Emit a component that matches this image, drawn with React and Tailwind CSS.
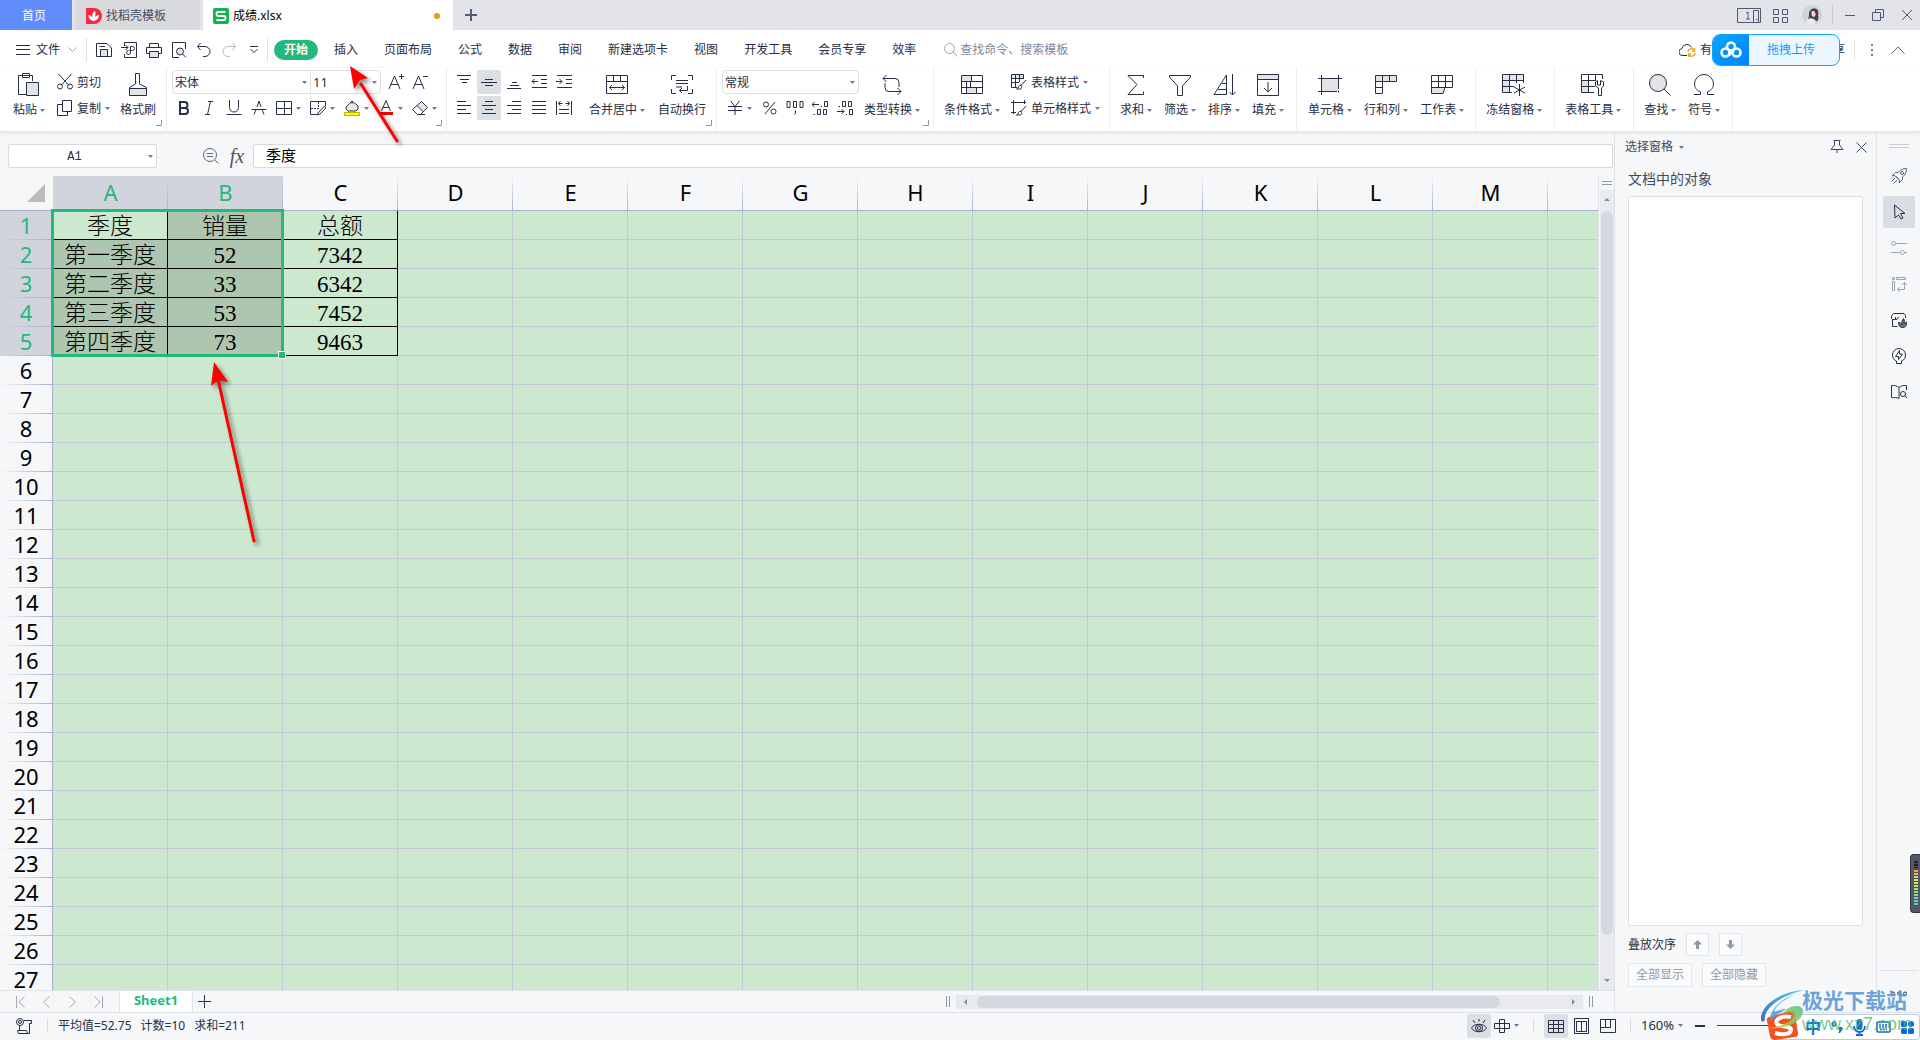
import clsx from "clsx";

const COLUMNS = ["A", "B", "C", "D", "E", "F", "G", "H", "I", "J", "K", "L", "M"];
const ROWS = Array.from({ length: 27 }, (_, i) => i + 1);

const DATA = [
  ["季度", "销量", "总额"],
  ["第一季度", "52", "7342"],
  ["第二季度", "33", "6342"],
  ["第三季度", "53", "7452"],
  ["第四季度", "73", "9463"],
];

const MENUS = ["插入", "页面布局", "公式", "数据", "审阅", "新建选项卡", "视图", "开发工具", "会员专享", "效率"];

function Icon({ w = 16, h = 16, d, shade, stroke = "currentColor", sw = 1, className, children }) {
  return (
    <svg
      width={w}
      height={h}
      viewBox={`0 0 ${w} ${h}`}
      fill="none"
      stroke={stroke}
      strokeWidth={sw}
      className={clsx("shrink-0", className)}
      aria-hidden="true"
    >
      {shade && <path d={shade} fill="#e3e4e6" stroke="none" />}
      {d && <path d={d} />}
      {children}
    </svg>
  );
}

function Caret({ className }) {
  return (
    <svg width="5" height="3" viewBox="0 0 5 3" className={clsx("shrink-0", className)} aria-hidden="true">
      <path d="M0 0H5L2.5 3Z" fill="#6d7a96" />
    </svg>
  );
}

function Corner() {
  return <Icon w={6} h={6} d="M5.5 0V5.5H0" stroke="#8b96ad" className="absolute bottom-1 right-1" />;
}

function Group({ className, corner, children }) {
  return (
    <div className={clsx("relative flex h-[62px] shrink-0 items-start border-r border-[#ebecee] pt-0.5", className)}>
      {children}
      {corner && <Corner />}
    </div>
  );
}

function BigButton({ label, caret = true, children }) {
  return (
    <button type="button" className="flex shrink-0 flex-col items-center gap-1 pt-[3px]">
      <span className="flex h-6 items-center justify-center">{children}</span>
      <span className="flex items-center gap-[3px] whitespace-nowrap leading-[18px]">
        {label}
        {caret && <Caret />}
      </span>
    </button>
  );
}

function SmallButton({ label, caret, children }) {
  return (
    <button type="button" className="flex h-6 items-center gap-1 whitespace-nowrap">
      {children}
      <span className="pt-0.5">{label}</span>
      {caret && <Caret />}
    </button>
  );
}

function Tool({ name, active, wide, children }) {
  return (
    <button
      type="button"
      aria-label={name}
      className={clsx(
        "flex h-6 shrink-0 items-center",
        wide ? "w-[34px] gap-1 pl-1" : "w-6 justify-center rounded-xs",
        active && "bg-[#dbe0e5]"
      )}
    >
      {children}
      {wide && <Caret />}
    </button>
  );
}

function Combo({ name, value, className }) {
  return (
    <label className={clsx("relative flex h-6 items-center border border-[#dcdee2] bg-white", className)}>
      <select aria-label={name} className="h-full w-full appearance-none bg-transparent pl-0.5 pt-0.5 outline-none">
        <option>{value}</option>
      </select>
      <Caret className="pointer-events-none absolute right-[3px]" />
    </label>
  );
}

function TitleBar() {
  return (
    <header className="flex h-[30px] shrink-0 items-stretch bg-[#e2e4e9]">
      <button type="button" className="w-[72px] bg-[#608dfb] pr-1 pt-px text-white">
        首页
      </button>
      <button type="button" className="ml-[3px] flex w-[125px] items-center gap-1 bg-[#d9dade] pl-[11px] pt-0.5 text-[#474f63]">
        <svg width="16" height="16" viewBox="0 0 16 16" aria-hidden="true">
          <path d="M1 0H8A8 8 0 0 1 8 16H1A1 1 0 0 1 0 15V1A1 1 0 0 1 1 0Z" fill="#f9293d" />
          <path d="M7.500 13C3.500 12 2 9 2.500 7C4.500 7 6 8.500 6.500 10C5.500 7 7 4 9 3C10 5 9.500 8 8.500 10C9 8.500 11 7 13 7C13 10 11 12.500 7.500 13Z" fill="#fff" />
        </svg>
        找稻壳模板
      </button>
      <div className="ml-[3px] flex w-[250px] items-center gap-1 bg-white pl-2.5 pt-0.5">
        <svg width="16" height="16" viewBox="0 0 16 16" aria-hidden="true">
          <rect width="16" height="16" rx="2" fill="#14b352" />
          <path d="M12.500 4H5A1.500 1.500 0 0 0 3.500 5.500V6.500A1.500 1.500 0 0 0 5 8H11A1.500 1.500 0 0 1 12.500 9.500V10.500A1.500 1.500 0 0 1 11 12H3.500" fill="none" stroke="#fff" strokeWidth="1.800" />
        </svg>
        <span className="flex-1 text-black">成绩.xlsx</span>
        <span className="mr-[13px] size-1.5 rounded-full bg-[#e89c0c]" />
      </div>
      <button type="button" aria-label="新建" className="ml-3 text-[#515d78]">
        <Icon w={12} h={12} d="M6 0V12M0 6H12" sw={2} />
      </button>
      <div className="ml-auto flex items-center pr-2 text-[#4d5873]">
        <button type="button" aria-label="窗口布局" className="mr-3">
          <Icon w={24} h={15}>
            <path d="M.5 .5H23.500V14.500H.5Z M16.500 2.500H21.500V14M16.500 2.500V14.500M19 11.500H20.500M9 5L11 4V11M9 11H13" />
          </Icon>
        </button>
        <button type="button" aria-label="应用" className="mr-3.5">
          <Icon w={15} h={15} d="M.5 1.500H5.500V6.500H.5ZM9.500 1.500H14.500V6.500H9.500ZM.5 9.500H5.500V14.500H.5ZM9.500 9.500H14.500V14.500H9.500Z" />
        </button>
        <svg width="20" height="20" viewBox="0 0 20 20" role="img" aria-label="用户头像">
          <circle cx="10" cy="10" r="10" fill="#c9d6db" />
          <path d="M7 9C7 5 10 3 13 3.500C16 4 17 7 16 10C17 12 16 15 15 16.500L12 14L8 13L6 14.500C7 12 7 11 7 9Z" fill="#4b3c42" />
          <path d="M9.500 6.500C12 5 14 7 13.500 10C13 13 10 12 9.500 10Z" fill="#f1d7cf" />
          <path d="M4 17C5 14 8 13 11 14L13.500 18.500C10 20.500 7 20 4 17Z" fill="#e8f0f2" />
        </svg>
        <span className="ml-2.5 h-5 w-px bg-[#c8cbd2]" />
        <button type="button" aria-label="最小化" className="ml-3">
          <Icon w={10} h={10} d="M0 5.500H10" />
        </button>
        <button type="button" aria-label="还原" className="ml-[17px]">
          <Icon w={12} h={12} d="M.5 3.500H8.500V11.500H.5ZM3.500 3.500V.5H11.500V8.500H8.500" />
        </button>
        <button type="button" aria-label="关闭" className="ml-[18px]">
          <Icon w={10} h={10} d="M0 0L10 10M10 0L0 10" />
        </button>
      </div>
    </header>
  );
}

function MenuBar() {
  return (
    <nav className="flex h-[38px] shrink-0 items-center bg-white pl-4 pt-px">
      <button type="button" className="flex items-center gap-1.5">
        <Icon w={14} h={10} d="M0 .5H14M0 4.500H14M0 9.500H14" />
        文件
        <Icon w={9} h={5} d="M.5 .5L4.500 4.500L8.500 .5" stroke="#9ba0aa" className="ml-0.5" />
      </button>
      <span className="ml-[9px] h-6 w-px bg-[#dfe1e4]" />
      <div className="ml-[9px] flex items-center gap-[9px]">
        <button type="button" aria-label="保存">
          <Icon d="M.5 1.500H11L15.500 6V14.500H.5ZM4.500 14V7.500H11.500V14M3.500 4.500H9" shade="M5 8H11V14H5Z" />
        </button>
        <button type="button" aria-label="输出为PDF">
          <Icon d="M3.500 4V.5H15.500V15.500H3.500V12M0 5.500H7M4.500 3L7 5.500L4.500 8M9.500 4.500H11.500A2 2 0 0 1 11.500 8.500H8.500M9.500 4.500V10A2 2 0 1 1 7.500 8.500" />
        </button>
        <button type="button" aria-label="打印">
          <Icon d="M3.500 5V1.500H12.500V5M3.500 11.500H.5V5.500H15.500V11.500H12.500M3.500 9.500H12.500V15.500H3.500Z" shade="M4 10H12V15H4Z" />
        </button>
        <button type="button" aria-label="打印预览">
          <Icon d="M8 15.500H1.500V.5H14.500V7M11.500 12L15 15.500M12.500 9.500A3.500 3.500 0 1 1 5.500 9.500A3.500 3.500 0 1 1 12.500 9.500" shade="M12.500 9.500A3.500 3.500 0 1 1 5.500 9.500A3.500 3.500 0 1 1 12.500 9.500" />
        </button>
        <button type="button" aria-label="撤销">
          <Icon d="M4.500 1L1.500 4.500L4.500 8M1.500 4.500H9A4.500 4.500 0 0 1 9 14.500H7" />
        </button>
        <button type="button" aria-label="恢复">
          <Icon d="M11.500 1L14.500 4.500L11.500 8M14.500 4.500H7A4.500 4.500 0 0 0 7 14.500H9" stroke="#b9bcc2" />
        </button>
        <button type="button" aria-label="自定义快速访问工具栏" className="ml-1">
          <Icon w={8} h={8} d="M0 .5H8M.5 3L4 6.500L7.500 3" />
        </button>
      </div>
      <span className="ml-[9px] h-6 w-px bg-[#dfe1e4]" />
      <button type="button" className="ml-1.5 h-5 w-11 rounded-full bg-[#24b97b] font-bold text-white">
        开始
      </button>
      <div className="ml-4 flex items-center gap-[26px] whitespace-nowrap pt-px">
        {MENUS.map((menu) => (
          <button key={menu} type="button">
            {menu}
          </button>
        ))}
      </div>
      <label className="ml-7 flex items-center gap-0.5">
        <Icon w={14} h={14} d="M10.500 5.500A5 5 0 1 1 .5 5.500A5 5 0 1 1 10.500 5.500M9 9L13.500 13.500" stroke="#9aa5bd" />
        <input
          type="text"
          aria-label="搜索"
          placeholder="查找命令、搜索模板"
          className="w-32 outline-none placeholder:text-[#7c88a3]"
        />
      </label>
      <div className="ml-auto flex items-center">
        <Icon w={17} h={14}>
          <path d="M8 12.500H4A3.500 3.500 0 0 1 3 5.500A5 5 0 0 1 12.500 4.500" />
          <path d="M9 9A3.500 3.500 0 0 1 15.500 7.500M16 10A3.500 3.500 0 0 1 9.500 11.500M15.500 5V8H13M9.500 14V11H12" stroke="#f5a623" strokeWidth="1.500" />
        </Icon>
        <span className="ml-1 w-3 overflow-hidden">有</span>
        <button type="button" className="relative z-10 flex h-8 w-32 overflow-hidden rounded-lg border border-[#14a4fd] bg-[#ecf7ff] text-[#0d9ffb]">
          <span className="flex h-full w-9 items-center justify-center bg-linear-to-br from-[#08a8ff] to-[#0580ff]">
            <svg width="22" height="18" viewBox="0 0 22 18" fill="none" stroke="#fff" strokeWidth="2.500" aria-hidden="true">
              <circle cx="11" cy="5.500" r="4" />
              <circle cx="5.500" cy="11.500" r="4" />
              <circle cx="16.500" cy="11.500" r="4" />
              <path d="M9 14L14 9" />
            </svg>
          </span>
          <span className="flex-1 self-center pr-1.5">拖拽上传</span>
        </button>
        <span className="-ml-[7px]">享</span>
        <span className="ml-[9px] h-5 w-px bg-[#dfe1e4]" />
        <button type="button" aria-label="更多" className="ml-4 text-[#7a8190]">
          <Icon w={2} h={12} d="M1 0V2M1 5V7M1 10V12" sw={2} />
        </button>
        <button type="button" aria-label="折叠功能区" className="ml-[18px] mr-[15px] text-[#5c6475]">
          <Icon w={14} h={8} d="M.5 7.500L7 1L13.500 7.500" />
        </button>
      </div>
    </nav>
  );
}

function Ribbon() {
  return (
    <div className="z-10 flex h-16 shrink-0 overflow-hidden border-b border-[#e4e6e9] bg-white shadow-[0_1px_4px_rgba(0,0,0,.08)]">
      <Group corner className="w-[167px] pl-[13px]">
        <BigButton label="粘贴">
          <Icon w={22} h={24} d="M14.500 8V2.500H.5V21.500H8.500M4.500 .5H11.500V4.500H4.500ZM8.500 9.500H20.500V22.500H8.500Z" shade="M9 10H20V22H9Z" />
        </BigButton>
        <div className="ml-3 flex w-[53px] flex-col gap-0.5">
          <SmallButton label="剪切">
            <Icon d="M1.500 0L12 11.500M14.500 0L4 11.500M5.500 12.500A2.500 2.500 0 1 1 .5 12.500A2.500 2.500 0 1 1 5.500 12.500M15.500 12.500A2.500 2.500 0 1 1 10.500 12.500A2.500 2.500 0 1 1 15.500 12.500" />
          </SmallButton>
          <SmallButton label="复制" caret>
            <Icon d="M5.500 .5H14.500V11.500H5.500ZM5 4.500H.5V15.500H10.500V12" />
          </SmallButton>
        </div>
        <div className="ml-2.5">
          <BigButton label="格式刷" caret={false}>
            <Icon w={20} h={24} d="M7.500 11V.5H11.500V11M7.500 11L1.500 14.500V22.500H18.500V14.500L11.500 11M1.500 15.500H18.500" shade="M2 16H18V22H2Z" />
          </BigButton>
        </div>
      </Group>

      <Group corner className="w-[280px] flex-col gap-0.5 pl-[5px]">
        <div className="flex">
          <Combo name="字体" value="宋体" className="w-[139px] rounded-l-sm" />
          <Combo name="字号" value="11" className="-ml-px w-[71px] rounded-r-sm text-[13px]" />
          <div className="ml-[3px] flex">
            <Tool name="增大字号">
              <Icon d="M1 15L6.500 2L12 15M3 10.500H10M11 2.500H16M13.500 0V5" />
            </Tool>
            <Tool name="减小字号">
              <Icon d="M1 15L6.500 2L12 15M3 10.500H10M11 2.500H16" />
            </Tool>
          </div>
        </div>
        <div className="flex">
          <div className="flex gap-px pr-px">
            <Tool name="加粗">
              <Icon w={12} h={14} d="M2 1V13M1 1H6.500A2.500 2.500 0 0 1 6.500 7H2M6.500 7H7A3 3 0 0 1 7 13H1" sw={2} />
            </Tool>
            <Tool name="倾斜">
              <Icon w={10} h={14} d="M4 .5H9M1 13.500H6M6.500 .5L3.500 13.500" />
            </Tool>
            <Tool name="下划线">
              <Icon w={16} h={16} d="M3.500 0V7.500A4.500 4.500 0 0 0 12.500 7.500V0M.5 14.500H15.500" />
            </Tool>
            <Tool name="删除线">
              <Icon w={16} h={16} d="M3 14.500L5 9.500M6 7L8 1L10 7M11 9.500L13 14.500M.5 9.500H15.500" />
            </Tool>
          </div>
          <Tool wide name="边框">
            <Icon d="M.5 1.500H15.500V14.500H.5ZM8.500 1.500V14.500M.5 8.500H15.500" />
          </Tool>
          <Tool wide name="绘图边框">
            <Icon>
              <path d="M15.500 6V1.500H.5V14.500H7M8 13L14.500 6L16 8L10 14L7.500 15Z" />
              <path d="M1 8.500H9M8.500 2V9" strokeDasharray="2 1" />
            </Icon>
          </Tool>
          <Tool wide name="填充颜色">
            <Icon>
              <path d="M2 7L8 1L14 6V9L12 11H4L2 9Z" fill="#e9eaec" />
              <path d="M8 1V4" />
              <path d="M.5 12.500H15.500V15.500H.5Z" fill="#ff0" stroke="#b8b800" />
            </Icon>
          </Tool>
          <Tool wide name="字体颜色">
            <Icon>
              <path d="M3.500 11L8 .5L12.500 11M5 7.500H11" />
              <path d="M1 13.500H15" stroke="#f00" strokeWidth="3" />
            </Icon>
          </Tool>
          <Tool wide name="清除">
            <Icon d="M9.500 1.500L15.500 7.500L8.500 14.500H5.500L.5 9.500ZM5 5.500L11.500 12M6 14.500H13" shade="M9.500 2L15 7.500L11 11L5.500 5.500Z" />
          </Tool>
        </div>
      </Group>

      <Group corner className="w-[270px] pl-[5px]">
        <div className="flex flex-col gap-0.5">
          <div className="flex gap-px">
            <Tool name="顶端对齐">
              <Icon d="M1 1.500H15M4 5.500H13M6 8.500H11" />
            </Tool>
            <Tool name="垂直居中" active>
              <Icon d="M4 5.500H12M0 8.500H16M4 11.500H12" />
            </Tool>
            <Tool name="底端对齐">
              <Icon d="M6 8.500H11M4 11.500H13M1 14.500H15" />
            </Tool>
            <Tool name="减少缩进量">
              <Icon d="M1 1.500H16M10 5.500H16M10 9.500H16M1 13.500H16M1 7.500H7M3.500 5L1 7.500L3.500 10" />
            </Tool>
            <Tool name="增加缩进量">
              <Icon d="M1 1.500H16M10 5.500H16M10 9.500H16M1 13.500H16M0 7.500H6M3.500 5L6 7.500L3.500 10" />
            </Tool>
          </div>
          <div className="flex gap-px">
            <Tool name="左对齐">
              <Icon d="M1 1.500H10M1 5.500H15M1 9.500H10M1 13.500H15" />
            </Tool>
            <Tool name="水平居中" active>
              <Icon d="M4 1.500H12M1 5.500H15M4 9.500H12M1 13.500H15" />
            </Tool>
            <Tool name="右对齐">
              <Icon d="M6 1.500H15M1 5.500H15M6 9.500H15M1 13.500H15" />
            </Tool>
            <Tool name="两端对齐">
              <Icon d="M1 1.500H15M1 5.500H15M1 9.500H15M1 13.500H15" />
            </Tool>
            <Tool name="分散对齐">
              <Icon d="M.5 1V15M15.500 1V15M3 9.500H13M3 13.500H13M2.500 3.500H6.500M9.500 3.500H13.500M4.500 1L2.500 3.500L4.500 6M11.500 1L13.500 3.500L11.500 6" />
            </Tool>
          </div>
        </div>
        <div className="ml-[13px] flex gap-[13px]">
          <BigButton label="合并居中">
            <Icon w={22} h={20} d="M.5 .5H21.500V18.500H.5ZM.5 6.500H21.500M7.500 .5V6.500M14.500 .5V6.500M3.500 12.500H18.500M6 10L3.500 12.500L6 15M16 10L18.500 12.500L16 15" />
          </BigButton>
          <BigButton label="自动换行" caret={false}>
            <Icon w={22} h={20} d="M5 .5H.5V5M17 .5H21.500V5M5 18.500H.5V14M17 18.500H21.500V14M5 5.500H17M5 8.500H17M5 12H11M16.500 11V15.500H8.500M11 13L8.500 15.500L11 18" />
          </BigButton>
        </div>
      </Group>

      <Group corner className="w-[217px] pl-[5px]">
        <div className="flex flex-col gap-0.5">
          <Combo name="数字格式" value="常规" className="w-[137px] rounded-sm" />
          <div className="flex gap-px pl-px">
            <Tool wide name="货币">
              <Icon w={16} h={16} d="M3.500 1L8 6.500L12.500 1M1 6.500H15M1 10.500H15M8 6.500V15" />
            </Tool>
            <Tool name="百分比">
              <Icon w={14} h={14} d="M12 1L2 13M5.500 3.500A2.500 2.500 0 1 1 .5 3.500A2.500 2.500 0 1 1 5.500 3.500M13 10.500A2.500 2.500 0 1 1 8 10.500A2.500 2.500 0 1 1 13 10.500" />
            </Tool>
            <Tool name="千位分隔">
              <Icon w={18} h={16} d="M1 1.500H4V7.500H1ZM7.500 1.500H10.500V7.500H7.500ZM14 1.500H17V7.500H14ZM9.500 10.500V13L8.500 14.500" />
            </Tool>
            <Tool name="增加小数位">
              <Icon w={16} h={16} d="M0 4.500H7M2.500 2L0 4.500L2.500 7M9 6.500H10M12.500 1.500H15.500V6.500H12.500ZM1.500 14.500H3M5.500 9.500H8.500V14.500H5.500ZM11.500 9.500H14.500V14.500H11.500Z" />
            </Tool>
            <Tool name="减少小数位">
              <Icon w={16} h={16} d="M1.500 6.500H3M5.500 1.500H8.500V6.500H5.500ZM11.500 1.500H14.500V6.500H11.500ZM0 11.500H7M4.500 9L7 11.500L4.500 14M9 14.500H10M12.500 9.500H15.500V14.500H12.500Z" />
            </Tool>
          </div>
        </div>
        <div className="ml-[5px]">
          <BigButton label="类型转换">
            <Icon w={20} h={22} d="M1 4.500H13A4 4 0 0 1 17 8.500V13M4.500 1L1 4.500L4.500 8M19 17.500H7A4 4 0 0 1 3 13.500V9M15.500 14L19 17.500L15.500 21" />
          </BigButton>
        </div>
      </Group>

      <Group className="pl-2.5 pr-[9px]">
        <BigButton label="条件格式">
          <Icon w={22} h={20} d="M.5 .5H21.500V18.500H.5ZM.5 6.500H21.500M.5 12.500H21.500M10.500 .5V6.500M5.500 6.500V18.500M9.500 6.500V12.500M15.500 12.500V18.500" shade="M1 1H10V6H1ZM6 13H15V18H6Z" />
        </BigButton>
        <div className="ml-[11px] flex flex-col gap-0.5">
          <SmallButton label="表格样式" caret>
            <Icon d="M6 13.500H.5V.5H12.500V5M.5 4.500H12.500M.5 8.500H8M4.500 .5V13M8.500 .5V8M15 6L10 11.500M10 11C7 11 8 14 5.500 15H9C11 15 11 13 10 11Z" shade="M1 1H12V4H1Z" />
          </SmallButton>
          <SmallButton label="单元格样式" caret>
            <Icon d="M0 2.500H15M2.500 0V14M13.500 0V4M0 12.500H5M15 6L10 11.500M10 11C7 11 8 14 5.500 15H9C11 15 11 13 10 11Z" />
          </SmallButton>
        </div>
      </Group>

      <Group className="gap-3 pl-2.5 pr-3">
        <BigButton label="求和">
          <Icon w={18} h={22} d="M16.500 4V1.500H1L10 10.500L1 20.500H16.500V17.500" />
        </BigButton>
        <BigButton label="筛选">
          <Icon w={22} h={22} d="M.5 1.500H21.500V3L13.500 12V21.500H8.500V12L.5 3Z" />
        </BigButton>
        <BigButton label="排序">
          <Icon w={23} h={22} d="M1 20.500L13.500 1V20.500ZM5 15.500H13M9 9.500H13M19.500 0V21M16.500 18L19.500 21L22.500 18" />
        </BigButton>
        <BigButton label="填充">
          <Icon w={22} h={22} d="M.5 .5H21.500V21.500H.5ZM.5 5.500H21.500M11 8V18M7 14L11 18L15 14" shade="M1 1H21V5H1Z" />
        </BigButton>
      </Group>

      <Group className="gap-3 pl-[11px] pr-[11px]">
        <BigButton label="单元格">
          <Icon w={24} h={20} d="M0 3.500H24M3.500 0V20M20.500 0V14M0 16.500H19M20.500 15.500V17.500" shade="M4 4H20V16H4Z" />
        </BigButton>
        <BigButton label="行和列">
          <Icon w={22} h={20} d="M.5 .5H21.500V6.500H7.500V18.500H.5ZM.5 6.500H7.500M.5 12.500H7.500M7.500 .5V6.500M14.500 .5V6.500" shade="M1 1H21V6H1Z" />
        </BigButton>
        <BigButton label="工作表">
          <Icon w={22} h={20} d="M.5 .5H21.500V12.500H.5ZM.5 6.500H21.500M7.500 .5V12.500M14.500 .5V12.500M.5 12.500V18.500H12L14 12.500" shade="M1 13H13L12 18H1Z" />
        </BigButton>
      </Group>

      <Group className="pl-2.5 pr-3">
        <BigButton label="冻结窗格">
          <Icon w={24} h={22} d="M10 18.500H.5V.5H21.500V9M.5 6.500H21.500M.5 12.500H12M7.500 .5V18.500M14.500 .5V9M17.500 10V22M12 13L23 19M23 13L12 19" shade="M1 1H21V6H7V18H1Z" />
        </BigButton>
      </Group>

      <Group className="pl-2.5 pr-3">
        <BigButton label="表格工具">
          <Icon w={24} h={22} d="M13 18.500H.5V.5H21.500V5M.5 6.500H15M.5 12.500H14M7.500 .5V18.500M14.500 .5V6M17.500 21.500V14L14.500 12V8L16.500 6.500V11H19.500V6.500L22.500 8V12L20.500 14V21.500Z" shade="M1 7H7V18H1Z" />
        </BigButton>
      </Group>

      <Group className="gap-3 pl-2.5 pr-3">
        <BigButton label="查找">
          <Icon w={22} h={22} d="M17.500 9A8.500 8.500 0 1 1 .5 9A8.500 8.500 0 1 1 17.500 9M15 15L21.500 21.500" shade="M17.500 9A8.500 8.500 0 1 1 .5 9A8.500 8.500 0 1 1 17.500 9" />
        </BigButton>
        <BigButton label="符号">
          <Icon w={22} h={22} d="M1 20.500H7.500V18C3 16 1.500 13 1.500 10A9.500 9.500 0 0 1 20.500 10C20.500 13 19 16 14.500 18V20.500H21" />
        </BigButton>
      </Group>
    </div>
  );
}

function FormulaBar() {
  return (
    <div className="flex h-11 shrink-0 items-start pl-2 pr-px pt-3 text-[#262f45]">
      <label className="relative flex h-6 w-[149px] items-center rounded-xs border border-[#d8dadf] bg-white">
        <input
          type="text"
          aria-label="名称框"
          defaultValue="A1"
          className="w-full bg-transparent pr-4 pt-0.5 text-center font-['Liberation_Mono',monospace] text-xs outline-none"
        />
        <Caret className="absolute right-[3px]" />
      </label>
      <button type="button" aria-label="浏览公式结果" className="ml-[46px] flex h-6 items-center text-[#5b6377]">
        <Icon d="M13.500 7A6.500 6.500 0 1 1 .5 7A6.500 6.500 0 1 1 13.500 7M11.500 11.500L15.500 15.500M4 5.500H10M4 8.500H10" />
      </button>
      <button type="button" aria-label="插入函数" className="ml-2.5 w-4 font-['Liberation_Serif',serif] text-xl italic leading-6 text-[#4b5469]">
        fx
      </button>
      <input
        type="text"
        aria-label="编辑栏"
        defaultValue="季度"
        className="ml-2 h-6 min-w-0 flex-1 rounded-xs border border-[#d8dadf] bg-white pb-1 pl-3 text-[15px] leading-[18px] text-black outline-none"
      />
    </div>
  );
}

function Sheet() {
  return (
    <div className="relative min-h-0 flex-1 overflow-hidden">
      <table className="w-full table-fixed border-separate border-spacing-0 text-center font-['Noto_Sans','Noto_Sans_CJK_SC',sans-serif] text-[22px] text-black">
        <colgroup>
          <col className="w-[53px]" />
          {COLUMNS.map((col) => (
            <col key={col} className="w-[115px]" />
          ))}
          <col />
        </colgroup>
        <thead>
          <tr className="h-[35px]">
            <th className="border-b border-[#a9b0ca] p-0">
              <svg width="18" height="18" viewBox="0 0 18 18" className="ml-auto mr-2" aria-hidden="true">
                <path d="M18 0V18H0Z" fill="#bbbcbe" />
              </svg>
            </th>
            {COLUMNS.map((col, i) => (
              <th
                key={col}
                className={clsx(
                  "border-b border-[#a9b0ca] bg-[linear-gradient(to_bottom,transparent,#a9b0ca)] bg-[length:1px_100%] bg-right bg-no-repeat p-0 pb-0.5 font-normal leading-8",
                  i < 2 && "bg-[#d1d4dc] text-[#24b97b]"
                )}
              >
                {col}
              </th>
            ))}
            <th className="border-b border-[#a9b0ca] p-0" />
          </tr>
        </thead>
        <tbody>
          {ROWS.map((row) => (
            <tr key={row} className="h-[29px]">
              <th
                className={clsx(
                  "border-r border-[#a9b0ca] bg-[linear-gradient(to_right,transparent,#a9b0ca)] bg-[length:100%_1px] bg-bottom bg-no-repeat p-0 pb-0.5 font-normal leading-[26px]",
                  row <= 5 && "bg-[#d1d4dc] text-[#24b97b]"
                )}
              >
                {row}
              </th>
              {[...COLUMNS, ""].map((col, c) => {
                const value = DATA[row - 1]?.[c];
                return (
                  <td
                    key={col}
                    className={clsx(
                      "border-b p-0",
                      c < 13 && "border-r",
                      value
                        ? "border-black pt-1 font-['Liberation_Serif','Noto_Sans_CJK_SC',serif] text-[23px] font-light leading-6"
                        : "border-[#c4c9db]",
                      value && c < 2 && !(c === 0 && row === 1) ? "bg-[#aec5af]" : "bg-[#cce8cf]"
                    )}
                  >
                    {value}
                  </td>
                );
              })}
            </tr>
          ))}
        </tbody>
      </table>
      {/* selection frame A1:B5 with its fill handle */}
      <div className="pointer-events-none absolute left-[51px] top-[33px] h-[148px] w-[233px] border-3 border-[#24b97b]">
        <span className="absolute -bottom-1 -right-1 size-1.5 bg-[#24b97b] outline outline-white" />
      </div>
    </div>
  );
}

function VerticalScroll() {
  return (
    <div className="flex w-4 shrink-0 flex-col items-center border-l border-[#dfe1e6]">
      <Icon w={10} h={4} d="M0 .5H10M0 3.500H10" stroke="#8d97ad" className="my-[5px]" />
      <div className="flex w-[14px] flex-1 flex-col items-center bg-[#e9eaef]">
        <Icon w={6} h={3} className="my-2">
          <path d="M0 3H6L3 0Z" fill="#7f8ba8" stroke="none" />
        </Icon>
        <div className="mt-0.5 w-3 flex-1 rounded-full bg-[#d5d8e0]" />
        <Icon w={6} h={3} className="mb-2 mt-11">
          <path d="M0 0H6L3 3Z" fill="#7f8ba8" stroke="none" />
        </Icon>
      </div>
    </div>
  );
}

function SheetTabs() {
  return (
    <div className="flex h-[22px] shrink-0 items-center border-t border-[#dfe2e8] pl-4">
      <div className="flex items-center gap-[17px] text-[#a6a9b0]">
        <button type="button" aria-label="第一张">
          <Icon w={9} h={12} d="M.5 0V12M8.500 .5L3 6L8.500 11.500" />
        </button>
        <button type="button" aria-label="上一张">
          <Icon w={9} h={12} d="M7.500 .5L1.500 6L7.500 11.500" />
        </button>
        <button type="button" aria-label="下一张">
          <Icon w={9} h={12} d="M1.500 .5L7.500 6L1.500 11.500" />
        </button>
        <button type="button" aria-label="最后一张">
          <Icon w={9} h={12} d="M8.500 0V12M.5 .5L6 6L.5 11.500" />
        </button>
      </div>
      <button type="button" className="ml-4 h-full w-[74px] border-x border-[#dfe2e8] bg-white pb-px text-[13px] font-bold text-[#24b97b]">
        Sheet1
      </button>
      <button type="button" aria-label="新建工作表" className="ml-[5px]">
        <Icon w={13} h={13} d="M6.500 0V13M0 6.500H13" />
      </button>
      <div className="ml-auto flex items-center pr-[21px]">
        <Icon w={4} h={11} d="M.5 0V11M3.500 0V11" stroke="#8d97ad" />
        <div className="mx-1.5 flex h-3.5 w-[627px] items-center bg-[#e9eaef]">
          <Icon w={3} h={6} className="ml-2">
            <path d="M3 0V6L0 3Z" fill="#7f8ba8" stroke="none" />
          </Icon>
          <div className="ml-2.5 mr-[72px] h-3 flex-1 rounded-full bg-[#d5d8e0]" />
          <Icon w={3} h={6} className="mr-2">
            <path d="M0 0V6L3 3Z" fill="#7f8ba8" stroke="none" />
          </Icon>
        </div>
        <Icon w={4} h={11} d="M.5 0V11M3.500 0V11" stroke="#8d97ad" />
      </div>
    </div>
  );
}

function SelectionPane() {
  return (
    <aside className="flex w-[262px] shrink-0 flex-col border-l border-[#dfe1e6] pb-[25px] pl-[13px] pr-[13px] text-[#3f4860]">
      <div className="-ml-[3px] -mr-1 flex h-[30px] items-center">
        <button type="button" className="flex items-center gap-1.5">
          选择窗格
          <Caret />
        </button>
        <button type="button" aria-label="固定" className="ml-auto">
          <Icon w={14} h={14} d="M3.500 .5H10.500M4.500 .5V5L1 9.500H13L9.500 5V.5M7 9.500V13" />
        </button>
        <button type="button" aria-label="关闭窗格" className="ml-3">
          <Icon w={11} h={11} d="M.5 .5L10.500 10.500M10.500 .5L.5 10.500" />
        </button>
      </div>
      <h2 className="my-[7px] text-sm leading-5">文档中的对象</h2>
      <div className="min-h-0 flex-1 rounded-xs border border-[#dcdee3] bg-white" />
      <div className="mt-[7px] flex items-center">
        <span className="mr-2.5 text-[#262f45]">叠放次序</span>
        <button type="button" aria-label="上移一层" className="mr-2.5 flex size-[23px] items-center justify-center border border-[#e3e5e9] bg-[#fafbfc] text-[#8f97a8]">
          <svg width="9" height="9" viewBox="0 0 9 9" fill="currentColor" aria-hidden="true">
            <path d="M4.500 0L9 4.500H6V9H3V4.500H0Z" />
          </svg>
        </button>
        <button type="button" aria-label="下移一层" className="flex size-[23px] items-center justify-center border border-[#e3e5e9] bg-[#fafbfc] text-[#8f97a8]">
          <svg width="9" height="9" viewBox="0 0 9 9" fill="currentColor" aria-hidden="true">
            <path d="M4.500 9L0 4.500H3V0H6V4.500H9Z" />
          </svg>
        </button>
      </div>
      <div className="mt-[7px] flex gap-2.5 text-[#9299a9]">
        <button type="button" className="h-6 w-16 border border-[#e3e5e9] bg-[#fafbfc]">
          全部显示
        </button>
        <button type="button" className="h-6 w-16 border border-[#e3e5e9] bg-[#fafbfc]">
          全部隐藏
        </button>
      </div>
    </aside>
  );
}

function RailButton({ name, active, className, children }) {
  return (
    <button
      type="button"
      aria-label={name}
      className={clsx("flex size-8 items-center justify-center rounded-xs", active && "bg-[#d9dde4]", className)}
    >
      {children}
    </button>
  );
}

function SideRail() {
  return (
    <aside className="flex w-11 shrink-0 flex-col items-center gap-1 border-l border-[#e3e5e9] pb-4 pt-3">
      <Icon w={20} h={4} d="M0 .5H20M0 3.500H20" stroke="#c9ccd2" className="mb-2" />
      <RailButton name="会员" className="text-[#5a6480]">
        <Icon d="M4.500 8L3 7.500L1 8L4.500 4.500H7C9 2 12 .5 15.500 .5C15.500 4 14 7 11.500 9V11.500L8 15L8.500 13L8 11.500ZM4.500 8L8 11.500M12.500 5A1.500 1.500 0 1 1 9.500 5A1.500 1.500 0 1 1 12.500 5M4 10L.5 13.500M6 12L2.500 15.500M2 9.500L1 10.500" />
      </RailButton>
      <RailButton name="选择" active className="text-[#262f45]">
        <Icon d="M3.500 1L14 9.500H9.500L12 14L10 15L7.500 11L4 14Z" />
      </RailButton>
      <RailButton name="属性" className="text-[#9aa1b0]">
        <Icon d="M5 3.500H16M0 12.500H9M4.500 3.500A2 2 0 1 1 .5 3.500A2 2 0 1 1 4.500 3.500M13.500 12.500A2 2 0 1 1 9.500 12.500A2 2 0 1 1 13.500 12.500M14 12.500H16" />
      </RailButton>
      <RailButton name="表格分析" className="text-[#9aa1b0]">
        <Icon d="M1.500 1.500H3.500V3.500H1.500ZM5.500 1.500H14.500V3.500H5.500ZM1.500 5.500H3.500V14.500H1.500ZM13.500 6.500V13.500H7M11 9L13.500 6.500L16 9M9 11L6.500 13.500L9 16" />
      </RailButton>
      <RailButton name="素材" className="text-[#262f45]">
        <Icon>
          <path d="M1.500 7.500V14.500H6.500M14.500 6V3.500L13 1.500H2.500L.5 4V6.500L1.500 7.500H4.500V5M4.500 7L6 7.500L7.500 5" />
          <path d="M11.500 15.500C8.500 15.500 7.500 13 7.500 10.500C9 10.500 10.500 11.500 11 13C10.500 10.500 11 8 12.500 6.500C13.500 8 13.500 10.500 13 12C13.500 11 15 10 16 10C16 13 14.500 15.500 11.500 15.500Z" fill="#6d7486" />
        </Icon>
      </RailButton>
      <RailButton name="智能" className="text-[#262f45]">
        <Icon d="M5.500 13C2.500 12 1.500 9.500 1.500 7A6.500 6.500 0 0 1 14.500 7C14.500 9.500 13.500 12 10.500 13V15.500H5.500ZM8.500 2.500L4.500 8.500H7.500V11.500L11.500 6H8.500Z" />
      </RailButton>
      <RailButton name="帮助" className="text-[#262f45]">
        <Icon d="M8 3.500C6 1.500 3 1.500 .5 1.500V13.500C3 13.500 6 13.500 8 14.500V3.500C10 1.500 13 1.500 15.500 1.500V6M14.500 10A2.500 2.500 0 1 1 9.500 10A2.500 2.500 0 1 1 14.500 10M14 12L16 14" />
      </RailButton>
      <span className="mt-auto h-px w-[38px] bg-[#dfe1e6]" />
      <button type="button" aria-label="更多工具" className="mt-4 text-[#262f45]">
        <Icon w={16} h={5} d="M3.500 2.500A1.500 1.500 0 1 1 .5 2.500A1.500 1.500 0 1 1 3.500 2.500M9.500 2.500A1.500 1.500 0 1 1 6.500 2.500A1.500 1.500 0 1 1 9.500 2.500M15.500 2.500A1.500 1.500 0 1 1 12.500 2.500A1.500 1.500 0 1 1 15.500 2.500" />
      </button>
    </aside>
  );
}

function StatusBar() {
  return (
    <footer className="flex h-7 shrink-0 items-center border-t border-[#dfe2e8] pb-0.5 pl-4">
      <button type="button" aria-label="录制宏">
        <Icon d="M7.500 4A3.500 3.500 0 1 1 .5 4A3.500 3.500 0 1 1 7.500 4M5.500 4A1.500 1.500 0 1 1 2.500 4A1.500 1.500 0 1 1 5.500 4M8 2.500H15.500V5.500H13.500V15.500H2.500L1.500 12.500H10.500L11.500 15.500M3.500 8V12" />
      </button>
      <span className="ml-[15px] h-3.5 w-px bg-[#d8dbe1]" />
      <span className="ml-2.5">平均值=52.75</span>
      <span className="ml-[9px]">计数=10</span>
      <span className="ml-[9px]">求和=211</span>
      <div className="ml-auto flex w-[453px] items-center">
        <Tool name="护眼模式" active>
          <Icon d="M.5 10C3 5 13 5 15.500 10C13 15 3 15 .5 10ZM11.500 10A3.500 3.500 0 1 1 4.500 10A3.500 3.500 0 1 1 11.500 10M9.500 10A1.500 2 0 1 1 6.500 10A1.500 2 0 1 1 9.500 10M8 1V3.500M2 2L4 5M14 2L12 5" />
        </Tool>
        <button type="button" aria-label="阅读模式" className="ml-[3px] flex items-center gap-1">
          <Icon d="M5.500 1.500H10.500V14.500H5.500ZM.5 5.500H15.500V10.500H.5Z" />
          <Caret />
        </button>
        <span className="ml-3.5 h-3.5 w-px bg-[#d8dbe1]" />
        <span className="ml-2.5 flex gap-0.5">
          <Tool name="普通视图" active>
            <Icon d="M.5 2.500H15.500V14.500H.5ZM.5 6.500H15.500M.5 10.500H15.500M5.500 2.500V14.500M10.500 2.500V14.500" />
          </Tool>
          <Tool name="分页预览">
            <Icon d="M.5 .5H14.500V15.500H.5ZM2.500 3.500H12.500V13.500H2.500ZM7.500 3.500V13.500" />
          </Tool>
          <Tool name="页面布局视图">
            <Icon d="M.5 1.500H15.500V14.500H.5ZM.5 9.500H10.500V1.500M5.500 1.500V9.500" />
          </Tool>
        </span>
        <span className="ml-2.5 h-3.5 w-px bg-[#d8dbe1]" />
        <button type="button" className="ml-2.5 flex items-center gap-1 text-[13px]">
          160%
          <Caret />
        </button>
        <button type="button" aria-label="缩小" className="ml-3">
          <Icon w={10} h={4} d="M0 2H10" sw={2} />
        </button>
        <input
          type="range"
          aria-label="显示比例"
          defaultValue="50"
          className="ml-3 h-px w-24 appearance-none bg-[#3b4255] [&::-webkit-slider-thumb]:appearance-none"
        />
      </div>
    </footer>
  );
}

function ImeBar() {
  return (
    <div className="absolute bottom-0 right-0 flex h-[26px] w-[142px] items-center justify-end gap-2.5 rounded-sm border border-[#bccbe4] bg-white pr-[5px] text-base font-bold leading-6 text-[#0a6bd6]">
      <span>中</span>
      <svg width="12" height="14" viewBox="0 0 12 14" fill="currentColor" aria-hidden="true">
        <circle cx="3" cy="4" r="1.800" fill="none" stroke="currentColor" strokeWidth="1.500" />
        <path d="M8 7H11V10L9 13H7.500L8.500 10H8Z" />
      </svg>
      <svg width="13" height="17" viewBox="0 0 13 17" fill="currentColor" aria-hidden="true">
        <rect x="3.500" width="6" height="11" rx="3" />
        <path d="M1 7C1 15 12 15 12 7M6.500 13V16M3 16H10" fill="none" stroke="currentColor" strokeWidth="1.800" />
      </svg>
      <svg width="15" height="12" viewBox="0 0 15 12" fill="none" stroke="currentColor" strokeWidth="1.500" aria-hidden="true">
        <rect x="1" y="1" width="13" height="10" rx="1" />
        <path d="M3 4H12M3 6H12M4 8.500H11" strokeDasharray="2 1" />
      </svg>
      <svg width="13" height="13" viewBox="0 0 13 13" fill="currentColor" aria-hidden="true">
        <rect width="6" height="6" rx="1.500" />
        <circle cx="10" cy="3" r="3" />
        <rect y="7" width="6" height="6" rx="1.500" />
        <rect x="7" y="7" width="6" height="6" rx="1.500" />
      </svg>
    </div>
  );
}

function Watermark() {
  return (
    <div className="pointer-events-none absolute bottom-0 right-2 flex items-end">
      <svg width="48" height="50" viewBox="0 0 48 50" className="-mr-1.5" aria-hidden="true">
        <defs>
          <linearGradient id="swooshBlue" x1="0" y1="1" x2="1" y2="0">
            <stop offset="0" stopColor="#3f74b8" />
            <stop offset="1" stopColor="#5cc5ee" />
          </linearGradient>
          <linearGradient id="swooshGreen" x1="0" y1="1" x2="1" y2="0">
            <stop offset="0" stopColor="#c8d92f" />
            <stop offset="1" stopColor="#4fbf86" />
          </linearGradient>
        </defs>
        <path d="M9 27L31 21Q34 20 35 24L38 43Q38 47 35 47L15 50Q11 50 10 46L7 31Q6 28 9 27Z" fill="#f4511e" />
        <path d="M31 27C23 25 14 29 17 34C20 38 31 35 31 40C30 45 22 45 15 43" fill="none" stroke="#fff" strokeWidth="4" />
        <path d="M44 0C22 1 0 15 1 29C1 32 3 33 5 30C3 18 22 5 44 0Z" fill="url(#swooshBlue)" />
        <path d="M35 4C19 10 8 22 11 31C12 28 18 24 26 19C22 19 16 21 14 22C16 15 25 9 35 4Z" fill="#4ba3dc" opacity=".9" />
        <path d="M27 19C34 14 44 15 43 22C42 32 25 40 8 38C20 37 33 32 33 26C33 22 29 21 22 24Z" fill="url(#swooshGreen)" opacity=".85" />
      </svg>
      <div className="pb-1.5">
        <p className="mb-0.5 text-[21px] font-bold leading-6 text-[#5b97d3]/90">极光下载站</p>
        <p className="font-['Liberation_Sans',sans-serif] text-lg leading-5 text-[#4bb96c]/75">www.xz7.com</p>
      </div>
    </div>
  );
}

function LevelMeter() {
  return (
    <div className="absolute right-0 top-[854px] h-[59px] w-2.5 rounded-l-sm border border-r-0 border-[#33363f] bg-[#555967] py-1.5 pl-[3px] pr-0.5">
      <div className="h-full bg-[repeating-linear-gradient(to_bottom,transparent_0_2px,#4b4e5a_2px_3px),linear-gradient(to_bottom,#222_15%,#f19c5c_20%,#e6df5d_42%,#a7e36c_62%,#43dfc5)]" />
    </div>
  );
}

function Arrows() {
  return (
    <svg
      width="440"
      height="580"
      viewBox="0 0 440 580"
      className="pointer-events-none absolute left-0 top-0 z-20 drop-shadow-[3px_3px_2px_rgba(0,0,0,.45)]"
      aria-hidden="true"
    >
      <path d="M397 141L361 84M254 541L218 379" stroke="#f00" strokeWidth="3" strokeLinecap="round" />
      <path d="M350 66L368 78L360 80L354 89ZM214 362L228 382L219 380L211 386Z" fill="#f00" />
    </svg>
  );
}

export default function App() {
  return (
    <div className="relative flex h-screen w-full flex-col overflow-hidden bg-[#f6f7f9] font-['Noto_Sans','Noto_Sans_CJK_SC',sans-serif] text-xs text-[#262f45]">
      <TitleBar />
      <MenuBar />
      <Ribbon />
      <div className="flex min-h-0 flex-1">
        <main className="flex min-w-0 flex-1 flex-col">
          <FormulaBar />
          <div className="flex min-h-0 flex-1">
            <Sheet />
            <VerticalScroll />
          </div>
          <SheetTabs />
        </main>
        <SelectionPane />
        <SideRail />
      </div>
      <StatusBar />
      <LevelMeter />
      <ImeBar />
      <Watermark />
      <Arrows />
    </div>
  );
}
